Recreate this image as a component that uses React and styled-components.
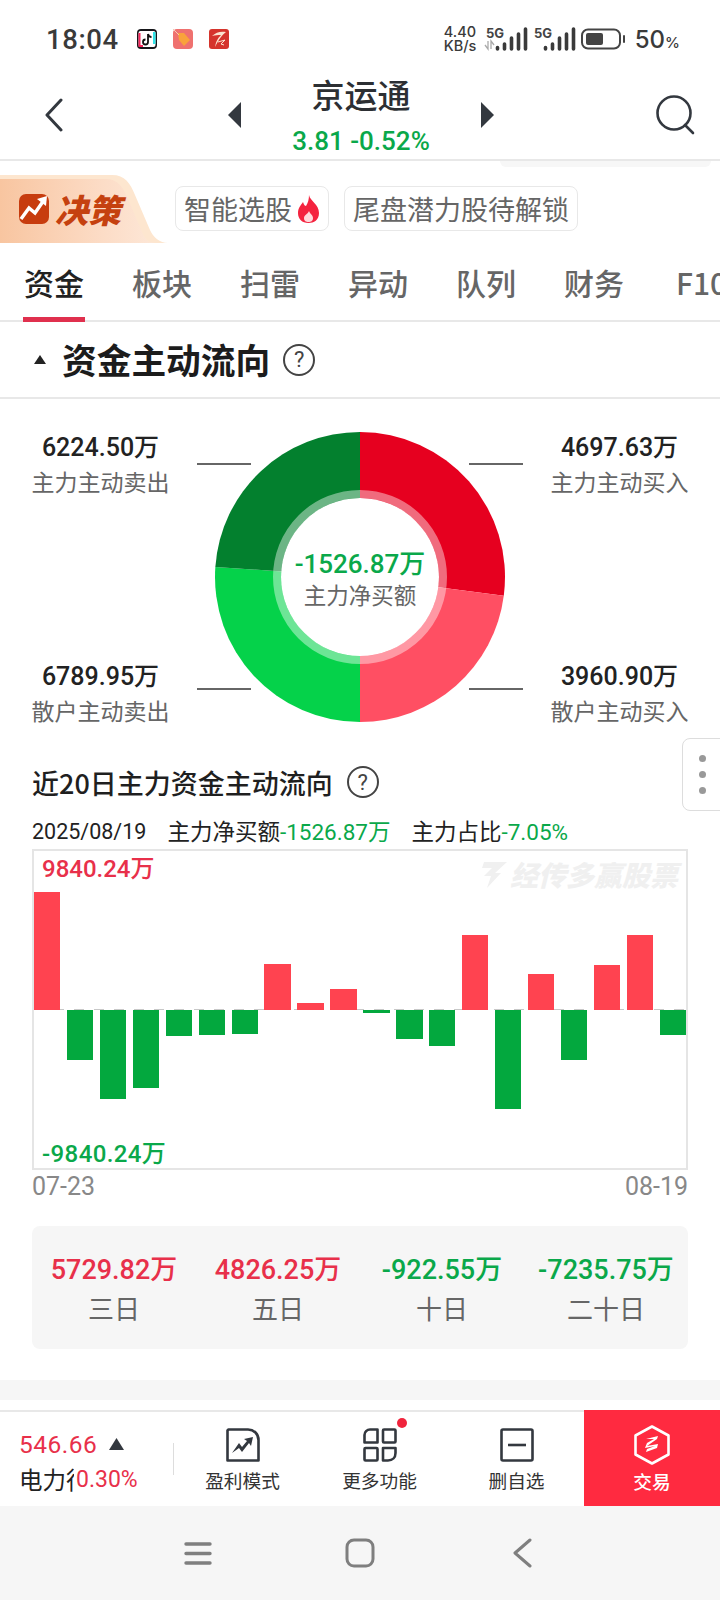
import styled, { createGlobalStyle } from "styled-components";

const RED = "#e8304a";
const GREEN = "#0aa84a";
const NUM = `Roboto, "Noto Sans CJK SC", sans-serif`;
const CJK = `"Noto Sans CJK SC", Roboto, sans-serif`;

const tabs = ["资金", "板块", "扫雷", "异动", "队列", "财务", "F10"];

const bars = [
  117.7, -50, -89, -78, -26.7, -25.7, -24, 45.7, 7, 20.7, -3, -29.3, -36.7, 75,
  -99, 35.7, -50, 44.3, 74.7, -25,
];

const stats = [
  { value: "5729.82万", label: "三日", color: RED },
  { value: "4826.25万", label: "五日", color: RED },
  { value: "-922.55万", label: "十日", color: GREEN },
  { value: "-7235.75万", label: "二十日", color: GREEN },
];

// start and end are degrees clockwise from 12 o'clock
const slices = [
  { start: 0, end: 97.4, color: "#e6001f" },
  { start: 97.4, end: 180, color: "#ff4f63" },
  { start: 180, end: 274, color: "#05d24a" },
  { start: 274, end: 360, color: "#03802e" },
];

const point = (r, deg) => {
  const a = ((deg - 90) * Math.PI) / 180;
  return `${165 + r * Math.cos(a)} ${150 + r * Math.sin(a)}`;
};

const slicePath = ({ start, end }) =>
  `M165 150 L${point(145, start)} A145 145 0 ${end - start > 180 ? 1 : 0} 1 ${point(145, end)} Z`;

const App = () => (
  <>
    <GlobalStyle />
    <Page>
      <StatusBar>
        <Time>18:04</Time>
        <AppIcons>
          <TikTokIcon />
          <TagIcon />
          <BrandIcon />
        </AppIcons>
        <StatusRight>
          <NetSpeed>
            <span>4.40</span>
            <span>KB/s</span>
          </NetSpeed>
          <SignalIcon arrows />
          <SignalIcon />
          <BatteryIcon />
          <BatteryText>
            50<small>%</small>
          </BatteryText>
        </StatusRight>
      </StatusBar>

      <NavBar>
        <svg width="20" height="34" viewBox="0 0 20 34">
          <path d="M17 2 L3 17 L17 32" fill="none" stroke="#33383f" strokeWidth="3" strokeLinecap="round" strokeLinejoin="round" />
        </svg>
        <NavCenter>
          <svg width="14" height="26" viewBox="0 0 14 26">
            <path d="M14 0 V26 L1 13 Z" fill="#33383f" />
          </svg>
          <TitleBlock>
            <StockName>京运通</StockName>
            <StockPrice>3.81 -0.52%</StockPrice>
          </TitleBlock>
          <svg width="14" height="26" viewBox="0 0 14 26">
            <path d="M0 0 V26 L13 13 Z" fill="#33383f" />
          </svg>
        </NavCenter>
        <svg width="40" height="40" viewBox="0 0 40 40">
          <circle cx="18" cy="18" r="16.5" fill="none" stroke="#33383f" strokeWidth="2.6" />
          <path d="M29 30 L37 38" stroke="#33383f" strokeWidth="2.6" strokeLinecap="round" />
        </svg>
      </NavBar>

      <PromoRow>
        <PeekTab />
        <Banner>
          <svg width="32" height="32" viewBox="0 0 32 32">
            <rect x="1" y="1" width="30" height="30" rx="7" fill="#c73c0e" />
            <path d="M3 26 L11 15 L17 20 L26 7" fill="none" stroke="#fff" strokeWidth="3.4" />
            <path d="M19 6 L29 3 L28 13 Z" fill="#fff" />
          </svg>
          <BannerText>决策</BannerText>
        </Banner>
        <Chip>
          智能选股
          <svg width="23" height="30" viewBox="0 0 23 30">
            <path d="M12 1 C13 7 22 10 22 19 C22 26 17 29 11.5 29 C5 29 1 25 1 19 C1 14 4 11 6 8 C7 11 8 12 9 12 C11 9 12 5 12 1 Z" fill="#f4233f" />
            <path d="M12 17 C13 20 16 21 16 24 C16 27 14 28 11.5 28 C9 28 7 27 7 24 C7 21 11 20 12 17 Z" fill="#ffd9dc" />
          </svg>
        </Chip>
        <Chip>尾盘潜力股待解锁</Chip>
      </PromoRow>

      <TabBar>
        {tabs.map((tab, i) => (
          <Tab key={tab} $active={i === 0}>
            {tab}
          </Tab>
        ))}
      </TabBar>

      <SectionHeader>
        <Caret />
        <SectionTitle>资金主动流向</SectionTitle>
        <Help />
      </SectionHeader>

      <DonutSection>
        <LabelColumn>
          <FlowLabel value="6224.50万" label="主力主动卖出" />
          <FlowLabel value="6789.95万" label="散户主动卖出" />
        </LabelColumn>
        <DonutWrap>
          <svg width="330" height="300" viewBox="0 0 330 300">
            {slices.map((s) => (
              <path key={s.start} d={slicePath(s)} fill={s.color} />
            ))}
            <circle cx="165" cy="150" r="83" fill="none" stroke="#fff" strokeOpacity="0.42" strokeWidth="8" />
            <circle cx="165" cy="150" r="79" fill="#fff" />
            <path d="M2 37 H56 M274 37 H328 M2 262 H56 M274 262 H328" stroke="#666" strokeWidth="2" />
          </svg>
          <DonutCenter>
            <DonutValue>-1526.87万</DonutValue>
            <DonutLabel>主力净买额</DonutLabel>
          </DonutCenter>
        </DonutWrap>
        <LabelColumn>
          <FlowLabel value="4697.63万" label="主力主动买入" />
          <FlowLabel value="3960.90万" label="散户主动买入" />
        </LabelColumn>
      </DonutSection>

      <ChartSection>
        <ChartTitleRow>
          <ChartTitle>近20日主力资金主动流向</ChartTitle>
          <Help />
        </ChartTitleRow>
        <InfoRow>
          <DateText>2025/08/19</DateText>
          <InfoItem>
            主力净买额<Green>-1526.87万</Green>
          </InfoItem>
          <InfoItem>
            主力占比<Green>-7.05%</Green>
          </InfoItem>
        </InfoRow>
        <Chart>
          <ZeroLine />
          <Watermark>
            <svg width="28" height="30" viewBox="0 0 28 30">
              <path d="M4 3 H27 L15 14 L21 14 L7 29 L11 17 L4 17 L12 9 H2 Z" fill="#f0f0f0" />
            </svg>
            经传多赢股票
          </Watermark>
          <ChartMax>9840.24万</ChartMax>
          <ChartMin>-9840.24万</ChartMin>
          {bars.map((h, i) => (
            <BarSlot key={i}>
              <HalfUp>{h > 0 && <Bar $up style={{ height: h }} />}</HalfUp>
              <HalfDown>{h < 0 && <Bar style={{ height: -h }} />}</HalfDown>
            </BarSlot>
          ))}
        </Chart>
        <AxisRow>
          <span>07-23</span>
          <span>08-19</span>
        </AxisRow>
        <StatsPanel>
          {stats.map((s) => (
            <StatCell key={s.label}>
              <StatValue $color={s.color}>{s.value}</StatValue>
              <StatLabel>{s.label}</StatLabel>
            </StatCell>
          ))}
        </StatsPanel>
      </ChartSection>

      <Spacer />

      <BottomBar>
        <IndexBlock>
          <IndexTop>
            <IndexPrice>546.66</IndexPrice>
            <svg width="15" height="12" viewBox="0 0 15 12">
              <path d="M7.5 0 L15 12 H0 Z" fill="#33383f" />
            </svg>
          </IndexTop>
          <IndexBottom>
            <IndexName>电力行业</IndexName>
            <IndexChange>0.30%</IndexChange>
          </IndexBottom>
        </IndexBlock>
        <Action>
          <svg width="34" height="34" viewBox="0 0 34 34">
            <path d="M2.5 1.5 H22 C28 1.5 32.5 6 32.5 12 V32.5 H1.5 V2.5 Z" fill="none" stroke="#33383f" strokeWidth="2.6" strokeLinejoin="round" />
            <path d="M6 25 L13 15 L16 19 L21 13 L18 11 L27 9 L25 18 L23 15 L16 24 L13 20 Z" fill="#33383f" />
          </svg>
          <ActionLabel>盈利模式</ActionLabel>
        </Action>
        <Action>
          <DotWrap>
            <svg width="34" height="34" viewBox="0 0 34 34" fill="none" stroke="#33383f" strokeWidth="2.6" strokeLinejoin="round">
              <path d="M7 1.5 H14.5 V14.5 H1.5 V7 C1.5 4 4 1.5 7 1.5 Z" />
              <rect x="20" y="1.5" width="12.5" height="13" rx="1" />
              <rect x="1.5" y="20" width="13" height="12.5" rx="1" />
              <path d="M20 20 H32.5 V25 C32.5 29.5 29.5 32.5 25 32.5 H20 Z" />
            </svg>
            <RedDot />
          </DotWrap>
          <ActionLabel>更多功能</ActionLabel>
        </Action>
        <Action>
          <svg width="34" height="34" viewBox="0 0 34 34">
            <rect x="1.5" y="1.5" width="31" height="31" rx="1.5" fill="none" stroke="#33383f" strokeWidth="2.6" />
            <path d="M8 17 H26" stroke="#33383f" strokeWidth="2.6" />
          </svg>
          <ActionLabel>删自选</ActionLabel>
        </Action>
        <TradeButton>
          <svg width="36" height="40" viewBox="0 0 36 40">
            <path d="M18 1.5 L34.5 10.5 V29.5 L18 38.5 L1.5 29.5 V10.5 Z" fill="none" stroke="#fff" strokeWidth="2.6" strokeLinejoin="round" />
            <path d="M12 14 L24 11 L23 14 L13 21 L24 19 L23 23 L12 27 L13 24 L21 21 L11 23 L13 18 L20 14 Z" fill="#fff" />
          </svg>
          <TradeLabel>交易</TradeLabel>
        </TradeButton>
      </BottomBar>

      <SystemNav>
        <NavSlot>
          <svg width="28" height="25" viewBox="0 0 28 25">
            <path d="M2 3 H26 M2 12.5 H26 M2 22 H26" stroke="#7f7f7f" strokeWidth="3.4" strokeLinecap="round" />
          </svg>
        </NavSlot>
        <NavSlot>
          <svg width="30" height="30" viewBox="0 0 30 30">
            <rect x="2" y="2" width="26" height="26" rx="7" fill="none" stroke="#7f7f7f" strokeWidth="3" />
          </svg>
        </NavSlot>
        <NavSlot>
          <svg width="20" height="30" viewBox="0 0 20 30">
            <path d="M18 2 L3 15 L18 28" fill="none" stroke="#7f7f7f" strokeWidth="3" strokeLinecap="round" strokeLinejoin="round" />
          </svg>
        </NavSlot>
      </SystemNav>

      <SideHandle>
        <i />
        <i />
        <i />
      </SideHandle>
    </Page>
  </>
);

const FlowLabel = ({ value, label }) => (
  <FlowBlock>
    <FlowValue>{value}</FlowValue>
    <FlowName>{label}</FlowName>
  </FlowBlock>
);

const Help = () => <HelpMark>?</HelpMark>;

const TikTokIcon = () => (
  <svg width="20" height="20" viewBox="0 0 20 20">
    <rect width="20" height="20" rx="4" fill="#16161a" />
    <rect x="1.5" y="2" width="17" height="16" rx="2" fill="#fff" />
    <path d="M1.5 4 V18 H6 V16 H3.5 V4 Z" fill="#f5245a" />
    <path d="M18.5 3 V15 H16 V3 Z" fill="#2fe4e8" />
    <path d="M11 5 V13 A2.5 2.5 0 1 1 8.5 10.5 M11 5 C11.5 7 13 8 14.5 8" fill="none" stroke="#111" strokeWidth="1.8" />
  </svg>
);

const TagIcon = () => (
  <svg width="20" height="20" viewBox="0 0 20 20">
    <rect width="20" height="20" rx="4" fill="#ef716f" />
    <path d="M5 4 L11 4 L17 11 L11 17 L6 11 Z" fill="#f9a23c" />
    <path d="M0 0 L6 6" stroke="#f6c9b5" strokeWidth="1" />
  </svg>
);

const BrandIcon = () => (
  <svg width="20" height="20" viewBox="0 0 20 20">
    <rect width="20" height="20" rx="3" fill="#d5342c" />
    <path d="M3 7 C7 3 12 2 17 3 C13 6 10 10 6 18 C7 12 9 9 12 6 C9 6 6 6 3 7 Z" fill="#fbe3cf" />
    <path d="M9 13 L16 11 L12 15 L15 16" fill="none" stroke="#fbe3cf" strokeWidth="1" />
  </svg>
);

const SignalIcon = ({ arrows }) => (
  <svg width="44" height="24" viewBox="0 0 44 24" overflow="visible">
    <text x="1" y="11" fontFamily="Inter, sans-serif" fontSize="13" fontWeight="700" fill="#444">
      5G
    </text>
    {arrows && <path d="M3 14 V22 L0 18 M6 22 V14 L9 18" fill="none" stroke="#aaa" strokeWidth="1.3" />}
    <path d="M12.5 20.5 V22 M19.5 17 V22 M26.5 11 V22 M33.5 7 V22 M40.5 2 V22" stroke="#3a3a3a" strokeWidth="3.6" strokeLinecap="round" />
  </svg>
);

const BatteryIcon = () => (
  <svg width="45" height="22" viewBox="0 0 45 22">
    <rect x="1" y="1.5" width="38" height="19" rx="6" fill="none" stroke="#444" strokeWidth="2" />
    <rect x="5" y="5" width="17" height="12" rx="2" fill="#444" />
    <path d="M43 8 V14" stroke="#444" strokeWidth="2" strokeLinecap="round" />
  </svg>
);

const GlobalStyle = createGlobalStyle`
  html, body {
    margin: 0;
    padding: 0;
    background: #fff;
  }
  * {
    box-sizing: border-box;
  }
`;

const Page = styled.div`
  position: relative;
  width: 720px;
  height: 1600px;
  overflow: hidden;
  background: #fff;
  display: flex;
  flex-direction: column;
  font-family: ${CJK};
  color: #222;
`;

const StatusBar = styled.div`
  height: 78px;
  padding: 0 40px 0 46px;
  display: flex;
  align-items: center;
  flex-shrink: 0;
`;

const Time = styled.span`
  font: 500 27.5px Roboto, sans-serif;
  color: #3a3a3a;
  letter-spacing: 0.6px;
`;

const AppIcons = styled.div`
  display: flex;
  gap: 16px;
  margin-left: 18px;
`;

const StatusRight = styled.div`
  margin-left: auto;
  display: flex;
  align-items: center;
  gap: 4px;
`;

const NetSpeed = styled.div`
  display: flex;
  flex-direction: column;
  font: 500 14.5px/14px Inter, sans-serif;
  color: #3a3a3a;
  width: 37px;
  white-space: nowrap;
`;

const BatteryText = styled.span`
  font: 500 24px Inter, sans-serif;
  color: #3a3a3a;
  margin-left: 5px;

  small {
    font-size: 15px;
  }
`;

const NavBar = styled.div`
  height: 83px;
  padding: 0 24px 8px 44px;
  display: flex;
  align-items: center;
  justify-content: space-between;
  border-bottom: 2px solid #e8e8e8;
  flex-shrink: 0;
`;

const NavCenter = styled.div`
  display: flex;
  align-items: center;
  width: 268px;
  justify-content: space-between;
  margin-left: 2px;
`;

const TitleBlock = styled.div`
  display: flex;
  flex-direction: column;
  align-items: center;
  margin-bottom: -1px;
`;

const StockName = styled.div`
  font-size: 33px;
  font-weight: 500;
  line-height: 40px;
  color: #2c2f33;
`;

const StockPrice = styled.div`
  font: 500 26px/30px ${NUM};
  color: ${GREEN};
  margin-top: 12px;
`;

const PromoRow = styled.div`
  position: relative;
  height: 82px;
  padding-top: 14px;
  display: flex;
  align-items: flex-start;
  gap: 15px;
  flex-shrink: 0;
`;

const PeekTab = styled.div`
  position: absolute;
  left: 500px;
  top: 0;
  width: 211px;
  height: 6px;
  background: #f7f7f7;
  border-radius: 0 0 6px 6px;
`;

const Banner = styled.div`
  position: relative;
  width: 170px;
  height: 68px;
  margin-right: -10px;
  padding: 0 0 0 18px;
  display: flex;
  align-items: center;
  gap: 5px;
  background: #fde6cf;
  clip-path: path("M0 0 H112 C125 0 130 8 135 20 L150 55 C153 62 160 68 168 68 H0 Z");

  &::before {
    content: "";
    position: absolute;
    inset: 4px 0 0 0;
    background: linear-gradient(90deg, #f8c5a0, #fcdcc6 60%, #fdeadc);
    clip-path: path("M0 0 H106 C118 0 123 8 128 20 L143 55 C146 62 150 64 158 64 H0 Z");
  }

  > * {
    position: relative;
  }
`;

const BannerText = styled.span`
  font-size: 33px;
  font-weight: 900;
  font-style: italic;
  line-height: 1;
  color: #c5410f;
`;

const Chip = styled.div`
  margin-top: 11px;
  height: 45px;
  padding: 0 8px;
  display: flex;
  align-items: center;
  gap: 5px;
  border: 1px solid #e8e8e8;
  border-radius: 8px;
  font-size: 27px;
  color: #666;
`;

const TabBar = styled.div`
  height: 79px;
  padding-left: 24px;
  display: flex;
  gap: 48px;
  border-bottom: 2px solid #e8e8e8;
  flex-shrink: 0;
  white-space: nowrap;
`;

const Tab = styled.div`
  position: relative;
  width: 60px;
  flex-shrink: 0;
  padding-top: 17px;
  font-size: 30px;
  line-height: 44px;
  font-weight: 500;
  color: ${(p) => (p.$active ? "#222" : "#666")};

  &:last-child {
    margin-left: 4px;
  }

  &::after {
    content: "";
    display: ${(p) => (p.$active ? "block" : "none")};
    position: absolute;
    left: -1px;
    right: -1px;
    bottom: -2px;
    height: 5px;
    background: #e0304e;
  }
`;

const SectionHeader = styled.div`
  height: 77px;
  padding-left: 34px;
  display: flex;
  align-items: center;
  border-bottom: 2px solid #e8e8e8;
  flex-shrink: 0;
`;

const Caret = styled.span`
  width: 0;
  height: 0;
  border-left: 6px solid transparent;
  border-right: 6px solid transparent;
  border-bottom: 9px solid #222;
`;

const SectionTitle = styled.h2`
  margin: 0 13px 0 16px;
  font-size: 34.7px;
  font-weight: 700;
  line-height: 1;
  color: #1c1c1c;
`;

const HelpMark = styled.span`
  width: 32px;
  height: 32px;
  display: flex;
  align-items: center;
  justify-content: center;
  border: 2px solid #444;
  border-radius: 50%;
  font: 400 22px Roboto, sans-serif;
  color: #444;
`;

const DonutSection = styled.div`
  height: 340px;
  padding: 0 32px;
  display: flex;
  justify-content: space-between;
  flex-shrink: 0;
`;

const LabelColumn = styled.div`
  width: 137px;
  padding: 32px 0 13px;
  display: flex;
  flex-direction: column;
  justify-content: space-between;
`;

const FlowBlock = styled.div`
  display: flex;
  flex-direction: column;
  align-items: center;
  white-space: nowrap;
`;

const FlowValue = styled.div`
  font: 500 25px/34px ${NUM};
  color: #222;
`;

const FlowName = styled.div`
  font-size: 23px;
  line-height: 32px;
  color: #666;
`;

const DonutWrap = styled.div`
  position: relative;
  width: 330px;
  height: 300px;
  margin-top: 28px;
`;

const DonutCenter = styled.div`
  position: absolute;
  inset: 0;
  display: flex;
  flex-direction: column;
  align-items: center;
  justify-content: center;
`;

const DonutValue = styled.div`
  font: 500 26px/34px ${NUM};
  color: ${GREEN};
`;

const DonutLabel = styled.div`
  font-size: 22.5px;
  line-height: 26px;
  color: #666;
`;

const ChartSection = styled.div`
  padding: 22px 32px 0;
  display: flex;
  flex-direction: column;
  flex-shrink: 0;
`;

const ChartTitleRow = styled.div`
  height: 44px;
  padding-bottom: 2px;
  display: flex;
  align-items: center;
  gap: 14px;
`;

const ChartTitle = styled.div`
  font-size: 27px;
  font-weight: 500;
  color: #1f1f1f;
`;

const InfoRow = styled.div`
  height: 28px;
  margin-top: 13px;
  display: flex;
  align-items: center;
  gap: 21px;
  font: 400 22.5px/28px ${NUM};
  color: #222;
  white-space: nowrap;
`;

const DateText = styled.span`
  font-size: 21.5px;
`;

const InfoItem = styled.span`
  font-size: 22.5px;
`;

const Green = styled.span`
  color: ${GREEN};
`;

const Chart = styled.div`
  position: relative;
  height: 321px;
  margin-top: 3px;
  display: flex;
  justify-content: space-between;
  border: 2px solid #e5e5e5;
`;

const ZeroLine = styled.div`
  position: absolute;
  left: 0;
  right: 0;
  top: 50%;
  margin-top: -1px;
  height: 1px;
  background: repeating-linear-gradient(90deg, #c8c8c8 0 10px, transparent 10px 20px);
`;

const Watermark = styled.div`
  position: absolute;
  right: 8px;
  top: 5px;
  display: flex;
  align-items: center;
  gap: 2px;
  font-size: 28px;
  font-weight: 900;
  font-style: italic;
  line-height: 36px;
  color: #f0f0f0;
`;

const ChartMax = styled.div`
  position: absolute;
  left: 8px;
  top: 2px;
  font: 500 24px/32px ${NUM};
  color: ${RED};
`;

const ChartMin = styled.div`
  position: absolute;
  left: 8px;
  bottom: -2px;
  font: 500 24px/32px ${NUM};
  letter-spacing: 0.4px;
  color: ${GREEN};
`;

const BarSlot = styled.div`
  position: relative;
  width: 26.4px;
  display: flex;
  flex-direction: column;
`;

const HalfUp = styled.div`
  flex: 1;
  display: flex;
  align-items: flex-end;
`;

const HalfDown = styled.div`
  flex: 1;
  display: flex;
  align-items: flex-start;
`;

const Bar = styled.div`
  width: 100%;
  background: ${(p) => (p.$up ? "#ff4350" : "#03a83e")};
`;

const AxisRow = styled.div`
  height: 32px;
  display: flex;
  align-items: center;
  justify-content: space-between;
  font: 400 25px ${NUM};
  color: #888;
`;

const StatsPanel = styled.div`
  height: 123px;
  margin-top: 24px;
  display: grid;
  grid-template-columns: repeat(4, 1fr);
  background: #f6f6f6;
  border-radius: 8px;
`;

const StatCell = styled.div`
  padding-top: 26px;
  display: flex;
  flex-direction: column;
  align-items: center;
  white-space: nowrap;
`;

const StatValue = styled.div`
  font: 500 27px/36px ${NUM};
  color: ${(p) => p.$color};
`;

const StatLabel = styled.div`
  margin-top: 2px;
  font-size: 26px;
  line-height: 36px;
  color: #666;
`;

const Spacer = styled.div`
  flex: 1;
  background: linear-gradient(#f6f6f6 0 20px, #fff 20px);
  margin-top: 31px;
`;

const BottomBar = styled.div`
  height: 96px;
  display: flex;
  border-top: 2px solid #e8e8e8;
  flex-shrink: 0;
`;

const IndexBlock = styled.div`
  position: relative;
  width: 174px;
  padding: 15px 0 0 19px;
  flex-shrink: 0;

  &::after {
    content: "";
    position: absolute;
    right: 0;
    top: 31px;
    height: 32px;
    width: 1px;
    background: #ddd;
  }
`;

const IndexTop = styled.div`
  display: flex;
  align-items: center;
  gap: 12px;
  height: 34px;
`;

const IndexPrice = styled.span`
  font: 400 24.5px ${NUM};
  color: ${RED};
  letter-spacing: 0.5px;
`;

const IndexBottom = styled.div`
  display: flex;
  align-items: center;
  height: 36px;
`;

const IndexName = styled.span`
  width: 55px;
  overflow: hidden;
  white-space: nowrap;
  font-size: 23.5px;
  color: #222;
`;

const IndexChange = styled.span`
  margin-left: 2px;
  font: 400 23px ${NUM};
  color: ${RED};
`;

const Action = styled.div`
  width: 137px;
  padding-top: 16px;
  display: flex;
  flex-direction: column;
  align-items: center;
  flex-shrink: 0;
`;

const ActionLabel = styled.div`
  margin-top: 3px;
  font-size: 18.7px;
  line-height: 30px;
  color: #333;
`;

const DotWrap = styled.div`
  position: relative;
  height: 34px;
`;

const RedDot = styled.span`
  position: absolute;
  right: -10px;
  top: -10px;
  width: 10px;
  height: 10px;
  border-radius: 50%;
  background: #f0243c;
`;

const TradeButton = styled.div`
  flex: 1;
  margin: -2px 0 0 -1px;
  padding-top: 15px;
  display: flex;
  flex-direction: column;
  align-items: center;
  background: #ff2a40;
`;

const TradeLabel = styled.div`
  margin-top: 1px;
  font-size: 18.7px;
  font-weight: 500;
  line-height: 30px;
  color: #fff;
`;

const SystemNav = styled.div`
  height: 94px;
  display: flex;
  justify-content: center;
  background: #f6f6f6;
  flex-shrink: 0;
`;

const NavSlot = styled.div`
  width: 162px;
  display: flex;
  align-items: center;
  justify-content: center;
`;

const SideHandle = styled.div`
  position: absolute;
  right: -2px;
  top: 738px;
  width: 40px;
  height: 73px;
  display: flex;
  flex-direction: column;
  align-items: center;
  justify-content: center;
  gap: 9px;
  background: #fff;
  border: 1px solid #ddd;
  border-radius: 8px 0 0 8px;

  i {
    width: 7px;
    height: 7px;
    border-radius: 50%;
    background: #999;
  }
`;

export default App;
